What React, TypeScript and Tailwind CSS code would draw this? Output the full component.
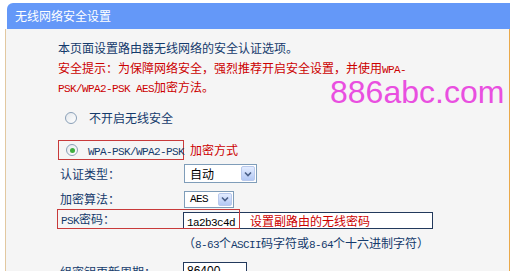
function Asc({ children }: { children: React.ReactNode }) {
  return <span className="whitespace-nowrap font-['Liberation_Mono',monospace] text-[11px] leading-none tracking-[-0.6px]">{children}</span>
}

function Radio({ checked }: { checked?: boolean }) {
  return (
    <span className="flex h-[12px] w-[12px] shrink-0 items-center justify-center rounded-full border border-[#8aa0b8] bg-gradient-to-br from-[#e4e8ec] to-white">
      {checked && <span className="h-[5px] w-[5px] rounded-full bg-[#3fae3f]" />}
    </span>
  )
}

function Select({ value, w, h }: { value: React.ReactNode; w: string; h: string }) {
  return (
    <div className={`flex items-stretch border border-[#7f9db9] bg-white ${w} ${h}`}>
      <div className="flex flex-1 items-center pl-[5px] text-[12px] leading-none text-black">{value}</div>
      <div className="m-px flex w-[14px] items-center justify-center rounded-[2px] border border-[#b9c9ec] bg-gradient-to-b from-[#e3ecff] to-[#b3c8f4]">
        <svg width="8" height="6" viewBox="0 0 8 6">
          <path d="M1 1.5 L4 4.5 L7 1.5" fill="none" stroke="#4a5f87" strokeWidth="1.6" />
        </svg>
      </div>
    </div>
  )
}

export default function App() {
  const navy = 'text-[#143a6c]'

  return (
    <div className="relative h-[271px] w-[517px] overflow-hidden bg-white font-['Noto_Sans_CJK_SC','Liberation_Sans',sans-serif] text-[12px]">
      <div className="ml-[7px] mt-[3px] flex h-[26px] w-[503px] items-center rounded-tl-[6px] bg-[#6498f8] pl-[8px] leading-none text-white">
        无线网络安全设置
      </div>

      <div className="ml-[5px] h-[300px] w-[505px] border-x border-l-[#e2c8a0] border-r-[#eaa94a] bg-[#f5f5f5] pl-[52px] pt-[9px]">
        <div className="leading-[19.5px]">
          <p className={navy}>本页面设置路由器无线网络的安全认证选项。</p>
          <p className="text-[#cc0000]">
            安全提示：为保障网络安全，强烈推荐开启安全设置，并使用<Asc>WPA-</Asc>
          </p>
          <p className="text-[#cc0000]">
            <Asc>PSK/WPA2-PSK AES</Asc>加密方法。
          </p>
        </div>

        <div className={`mt-[11px] flex h-[20px] items-center pl-[7px] ${navy}`}>
          <Radio />
          <span className="ml-[12px]">不开启无线安全</span>
        </div>

        <div className="mt-[12.5px] flex h-[20px] items-center">
          <div className={`flex h-[20px] w-[126px] items-center whitespace-nowrap border border-[#c83a3a] pl-[7px] ${navy}`}>
            <Radio checked />
            <span className="ml-[10px]">
              <Asc>WPA-PSK/WPA2-PSK</Asc>
            </span>
          </div>
          <span className="ml-[6px] text-[#cc0000]">加密方式</span>
        </div>

        <div className="mt-[4px] flex items-center">
          <span className={`w-[126px] pl-[2px] ${navy}`}>认证类型：</span>
          <Select value="自动" w="w-[73px]" h="h-[19px]" />
        </div>

        <div className="mt-[7px] flex items-center">
          <span className={`w-[126px] pl-[2px] ${navy}`}>加密算法：</span>
          <Select value={<Asc>AES</Asc>} w="w-[50px]" h="h-[17px]" />
        </div>

        <div className="relative mt-[1px] flex h-[20px] items-center">
          <span className={`w-[125px] pl-[3px] ${navy}`}>
            <Asc>PSK</Asc>密码：
          </span>
          <div className="mt-[3px] flex h-[17px] w-[250px] items-center border border-[#22395c] bg-white pl-[3px]">
            <span className="w-[63px] text-black">
              <Asc>1a2b3c4d</Asc>
            </span>
            <span className="text-[#cc0000]">设置副路由的无线密码</span>
          </div>
          <div className="absolute -left-px top-0 h-[20px] w-[183px] border border-[#c83a3a]" />
        </div>

        <div className={`ml-[125px] mt-[4px] leading-[20px] ${navy}`}>
          （<Asc>8-63</Asc>个<Asc>ASCII</Asc>码字符或<Asc>8-64</Asc>个十六进制字符）
        </div>

        <div className="mt-[9px] flex items-start">
          <span className={`w-[125px] pl-[2px] pt-[1px] ${navy}`}>组密钥更新周期：</span>
          <div className="flex h-[18px] w-[64px] items-center border border-[#22395c] bg-white pl-[3px] font-['Liberation_Sans',sans-serif] text-black">
            86400
          </div>
        </div>
      </div>

      <div className="absolute left-[330px] top-[76px] font-['Liberation_Sans',sans-serif] text-[32px] leading-none text-[#e94fe0]">
        886abc.com
      </div>
    </div>
  )
}
